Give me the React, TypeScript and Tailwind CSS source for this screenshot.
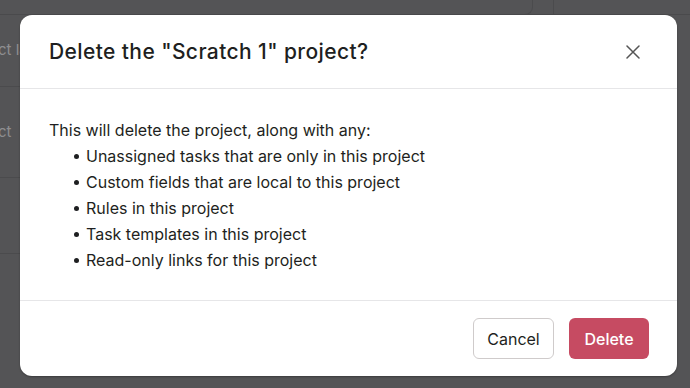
import React from "react";

export default function App() {
  const items = [
    "Unassigned tasks that are only in this project",
    "Custom fields that are local to this project",
    "Rules in this project",
    "Task templates in this project",
    "Read-only links for this project",
  ];
  return (
    <div
      className="relative h-[388px] w-[690px] overflow-hidden bg-[#545456]"
      style={{ fontFamily: "Inter, 'Noto Sans', sans-serif" }}
    >
      {/* background page (dimmed) */}
      <div className="flex h-full">
        <div className="flex w-[460px] flex-col pt-[15px]">
          <div className="flex h-[72px] items-center border-b border-[#4b4b4d] text-[15px] text-[#8e8e90]">
            <span className="-ml-[2px]">ct label</span>
          </div>
          <div className="flex h-[91px] items-center border-b border-[#4b4b4d] text-[15px] text-[#8e8e90]">
            <span className="-ml-[2px]">ct</span>
          </div>
          <div className="h-[76px] border-b border-[#4b4b4d]" />
        </div>
        <div className="flex h-[15px] flex-1">
          <div className="h-full w-[73px] rounded-br-[8px] border-r border-b border-[#4b4b4d]" />
          <div className="ml-[20px] h-full border-l border-[#4b4b4d]" />
        </div>
      </div>
      <div className="absolute left-0 top-[14px] h-px w-full bg-[#4a4a4c]" />

      {/* modal */}
      <div className="absolute left-[20px] top-[15px] flex h-[361px] w-[657px] flex-col rounded-[12px] bg-white shadow-[0_1px_2px_rgba(0,0,0,0.3)]">
        <div className="flex h-[74px] items-center justify-between border-b border-[#e6e6e8] pl-[29px] pr-[37px]">
          <h1 className="text-[21px] font-medium tracking-[0.4px] text-[#1e1f21]">
            Delete the "Scratch 1" project?
          </h1>
          <svg width="14" height="14" viewBox="0 0 14 14" className="mt-[1px]">
            <path d="M1 1L13 13M13 1L1 13" stroke="#555" strokeWidth="1.5" strokeLinecap="round" />
          </svg>
        </div>
        <div className="flex-1 border-b border-[#e6e6e8] pl-[29px] pt-[28px] text-[16px] leading-[26px] text-[#1e1f21]">
          <p>This will delete the project, along with any:</p>
          <ul className="pl-[25px]">
            {items.map((t) => (
              <li key={t} className="flex items-center">
                <span className="mr-[7px] inline-block h-[5px] w-[5px] rounded-full bg-[#1e1f21]" />
                {t}
              </li>
            ))}
          </ul>
        </div>
        <div className="flex h-[75px] items-center justify-end gap-[15px] pr-[28px]">
          <button className="h-[41px] w-[81px] rounded-[6px] border border-[#cfcbcb] bg-white text-[16px] text-[#1e1f21]">
            Cancel
          </button>
          <button className="h-[41px] w-[80px] rounded-[6px] bg-[#c64b62] text-[16px] font-medium text-white">
            Delete
          </button>
        </div>
      </div>
    </div>
  );
}
